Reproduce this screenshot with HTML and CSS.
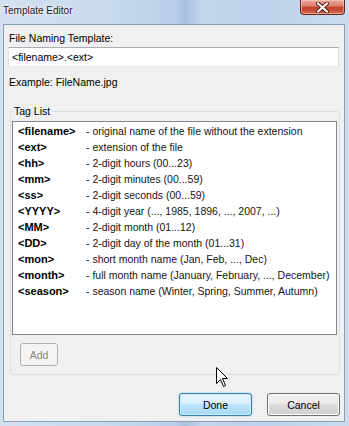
FILE: index.html
```html
<!DOCTYPE html>
<html lang="en">
<head>
  <meta charset="UTF-8" />
  <title>Template Editor</title>
  <meta name="viewport" content="width=device-width, initial-scale=1.0" />
  <link rel="stylesheet" href="styles.css">
</head>
<body>
  <div class="window">
    <div class="titlebar">
      <span class="title">Template Editor</span>
      <button class="close" aria-label="Close">
        <svg width="13" height="11" viewBox="0 0 13 11">
          <path d="M2 1.5 L11 9.5 M11 1.5 L2 9.5" stroke="#4a1a12" stroke-width="4" stroke-linecap="round" />
          <path d="M2 1.5 L11 9.5 M11 1.5 L2 9.5" stroke="#ffffff" stroke-width="2.2" stroke-linecap="round" />
        </svg>
      </button>
    </div>

    <div class="client">
      <div class="label">File Naming Template:</div>
      <div class="field">&lt;filename&gt;.&lt;ext&gt;</div>
      <div class="example">Example: FileName.jpg</div>

      <fieldset class="group">
        <legend>Tag List</legend>
        <div class="list">
          <div class="row"><span class="tag">&lt;filename&gt;</span><span class="desc">- original name of the file without the extension</span></div>
          <div class="row"><span class="tag">&lt;ext&gt;</span><span class="desc">- extension of the file</span></div>
          <div class="row"><span class="tag">&lt;hh&gt;</span><span class="desc">- 2-digit hours (00...23)</span></div>
          <div class="row"><span class="tag">&lt;mm&gt;</span><span class="desc">- 2-digit minutes (00...59)</span></div>
          <div class="row"><span class="tag">&lt;ss&gt;</span><span class="desc">- 2-digit seconds (00...59)</span></div>
          <div class="row"><span class="tag">&lt;YYYY&gt;</span><span class="desc">- 4-digit year (..., 1985, 1896, ..., 2007, ...)</span></div>
          <div class="row"><span class="tag">&lt;MM&gt;</span><span class="desc">- 2-digit month (01...12)</span></div>
          <div class="row"><span class="tag">&lt;DD&gt;</span><span class="desc">- 2-digit day of the month (01...31)</span></div>
          <div class="row"><span class="tag">&lt;mon&gt;</span><span class="desc">- short month name (Jan, Feb, ..., Dec)</span></div>
          <div class="row"><span class="tag">&lt;month&gt;</span><span class="desc">- full month name (January, February, ..., December)</span></div>
          <div class="row"><span class="tag">&lt;season&gt;</span><span class="desc">- season name (Winter, Spring, Summer, Autumn)</span></div>
        </div>
        <button class="btn add" disabled>Add</button>
      </fieldset>

      <div class="actions">
        <button class="btn primary">Done</button>
        <button class="btn">Cancel</button>
      </div>
    </div>

    <svg class="cursor" width="13" height="21" viewBox="0 0 13 21">
      <path d="M0.5 0.5 L0.5 16.5 L4.5 12.5 L7.5 19.5 L9.5 18.5 L6.5 11.5 L11.5 11.5 Z" fill="#ffffff" stroke="#000000" stroke-width="1" stroke-linejoin="miter" />
    </svg>
  </div>
</body>
</html>
```

FILE: styles.css
```css
html, body {
  margin: 0;
  padding: 0;
  font-family: "Liberation Sans", Arial, sans-serif;
  color: #000;
}

.window {
  position: relative;
  width: 349px;
  height: 426px;
  display: flex;
  flex-direction: column;
  overflow: hidden;
  background: linear-gradient(90deg, #d3e1f0 0%, #c9daee 30%, #b9cfe8 50%, #a9c2e0 53%, #c3d6ec 58%, #bcd1ea 75%, #cbdcef 100%);
}

/* title bar */
.titlebar {
  flex: none;
  height: 24px;
  display: flex;
  align-items: flex-start;
}

.title {
  margin: 5px 0 0 3px;
  font-size: 10px;
  line-height: 12px;
  color: #1b1b1b;
  text-shadow: 0 0 6px #ffffff, 0 0 3px #ffffff;
}

.close {
  margin-left: auto;
  margin-right: 4px;
  width: 45px;
  height: 15px;
  padding: 0;
  display: flex;
  align-items: center;
  justify-content: center;
  border: 1px solid #6a2418;
  border-top: none;
  border-radius: 0 0 4px 4px;
  background: linear-gradient(#e9a899 0%, #dd8470 40%, #c4422b 55%, #c9523a 80%, #d9765e 100%);
  box-shadow: inset 0 0 0 1px rgba(255, 220, 210, 0.5);
}

/* client area */
.client {
  flex: 1;
  margin: 0 4px 4px 3px;
  padding: 6px 4px 0 4px;
  display: flex;
  flex-direction: column;
  background: #f0f0f0;
  border: 1px solid #8b9db5;
  font-size: 10.5px;
  line-height: 14px;
}

.label {
  margin-left: 1px;
}

.field {
  margin-top: 2px;
  width: 331px;
  height: 20px;
  box-sizing: border-box;
  padding-left: 3px;
  line-height: 18px;
  background: #ffffff;
  border: 1px solid;
  border-color: #abadb3 #dbdfe6 #e3e9ef #e2e3ea;
}

.example {
  margin: 8px 0 0 1px;
}

/* tag list group */
.group {
  margin: 15px 0 0 2px;
  width: 330px;
  box-sizing: border-box;
  padding: 3px 2px 8px 1px;
  border: 1px solid #d5dfe5;
  border-radius: 3px;
  min-width: 0;
}

.group legend {
  margin-left: 1px;
  padding: 0 1px;
  line-height: 14px;
}

.list {
  height: 214px;
  box-sizing: border-box;
  padding: 1px 0 0 5px;
  background: #ffffff;
  border: 1px solid #828790;
}

.row {
  display: flex;
  align-items: center;
  height: 16px;
  white-space: nowrap;
}

.tag {
  flex: none;
  width: 68px;
  font-size: 11px;
  font-weight: bold;
}

.desc {
  color: #151515;
}

/* buttons */
.btn {
  width: 73px;
  height: 23px;
  padding: 0;
  font-family: inherit;
  font-size: 10.5px;
  color: #000;
  border: 1px solid #707070;
  border-radius: 3px;
  background: linear-gradient(#f2f2f2 0%, #ebebeb 45%, #dddddd 50%, #cfcfcf 100%);
  box-shadow: inset 0 0 0 1px #fbfbfb;
}

.btn.primary {
  border-color: #3c7fb1;
  background: linear-gradient(#eaf6fd 0%, #d9f0fc 45%, #bee6fd 50%, #a7d9f5 100%);
  box-shadow: inset 0 0 0 1px #c6ecfc, 0 0 2px #7fc4ee;
}

.btn.add {
  display: block;
  margin: 8px 0 0 8px;
  width: 38px;
  color: #838383;
  border-color: #adb2b5;
  background: #f4f4f4;
  box-shadow: none;
}

.actions {
  display: flex;
  justify-content: flex-end;
  gap: 15px;
  margin-top: 18px;
}

.cursor {
  position: absolute;
  left: 216px;
  top: 367px;
}
```
